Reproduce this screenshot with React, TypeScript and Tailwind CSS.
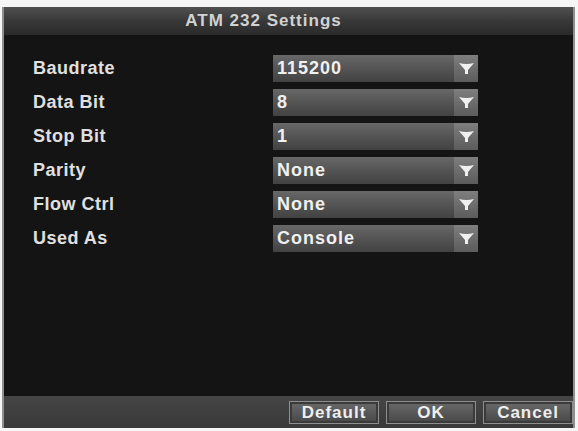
const rows = [
  { label: "Baudrate", value: "115200" },
  { label: "Data Bit", value: "8" },
  { label: "Stop Bit", value: "1" },
  { label: "Parity", value: "None" },
  { label: "Flow Ctrl", value: "None" },
  { label: "Used As", value: "Console" },
];

function Arrow() {
  return (
    <svg width="15" height="13" viewBox="0 0 15 13" className="block">
      <path d="M0 1 Q7.5 3 15 1 L9 8 L9 12 L6 12 L6 8 Z" fill="#f0f0f0" />
    </svg>
  );
}

function Select({ value }: { value: string }) {
  return (
    <div className="flex h-[27px] w-[205px] items-stretch bg-gradient-to-b from-[#686868] via-[#545454] to-[#424242]">
      <div className="flex flex-1 items-center pl-[4px] text-[18px] font-bold tracking-[1px] text-[#f0f0f0]">
        {value}
      </div>
      <div className="flex w-[24px] items-center justify-center bg-gradient-to-b from-[#7e7e7e] to-[#5c5c5c]">
        <Arrow />
      </div>
    </div>
  );
}

function Button({ children }: { children: string }) {
  return (
    <button className="flex h-[23px] w-[90px] items-center justify-center border border-[#8e8e8e] bg-gradient-to-b from-[#6a6a6a] to-[#474747] text-[17px] font-bold leading-none tracking-[1px] text-[#eeeeee] shadow-[inset_0_0_0_2px_#3a3a3a]">
      {children}
    </button>
  );
}

export default function App() {
  return (
    <div
      className="flex h-[431px] w-[578px] flex-col bg-[#f5f5f5] pb-[3px] pl-[2px] pr-[3px] pt-[7px]"
      style={{ fontFamily: '"Liberation Sans", Arial, sans-serif' }}
    >
      <div className="flex flex-1 flex-col border-l-2 border-r-2 border-[#8f8f8f]">
        {/* Title bar */}
        <div className="flex h-[28px] items-center justify-center bg-gradient-to-b from-[#505050] via-[#383838] to-[#2a2a2a] pr-[50px] text-[17px] font-bold tracking-[1px] text-[#d2d2d2]">
          ATM 232 Settings
        </div>

        {/* Body */}
        <div className="flex flex-1 flex-col gap-[7px] bg-[#141414] pl-[29px] pt-[20px]">
          {rows.map((r) => (
            <div key={r.label} className="flex items-center">
              <div className="w-[240px] text-[18px] font-bold tracking-[0.5px] text-[#e0e0e0]">
                {r.label}
              </div>
              <Select value={r.value} />
            </div>
          ))}
        </div>

        {/* Footer */}
        <div className="flex h-[32px] items-center justify-end gap-[7px] bg-gradient-to-b from-[#454545] to-[#393939]">
          <Button>Default</Button>
          <Button>OK</Button>
          <Button>Cancel</Button>
        </div>
      </div>
    </div>
  );
}
